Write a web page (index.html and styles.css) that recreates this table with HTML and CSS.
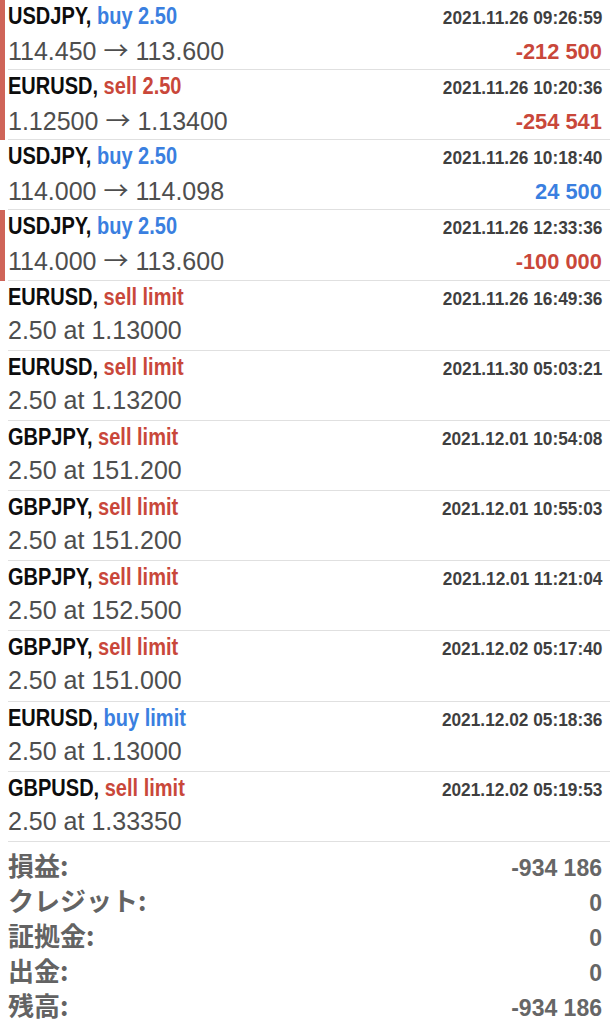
FILE: index.html
```html
<!DOCTYPE html>
<html lang="ja">
<head>
<meta charset="utf-8">
<title>History</title>
<link rel="stylesheet" href="styles.css">
</head>
<body>
<div class="list">
  <div class="row">
    <div class="bar on"></div>
    <div class="body">
      <div class="main">
        <div class="title"><span class="cond"><span class="sym">USDJPY,</span> <span class="buy">buy 2.50</span></span></div>
        <div class="sub">114.450<span class="arrow">→</span>113.600</div>
      </div>
      <div class="side">
        <div class="date"><span class="cond-r">2021.11.26 09:26:59</span></div>
        <div class="pl"><span class="amt sell">-212 500</span></div>
      </div>
    </div>
  </div>
  <div class="row">
    <div class="bar on"></div>
    <div class="body">
      <div class="main">
        <div class="title"><span class="cond"><span class="sym">EURUSD,</span> <span class="sell">sell 2.50</span></span></div>
        <div class="sub">1.12500<span class="arrow">→</span>1.13400</div>
      </div>
      <div class="side">
        <div class="date"><span class="cond-r">2021.11.26 10:20:36</span></div>
        <div class="pl"><span class="amt sell">-254 541</span></div>
      </div>
    </div>
  </div>
  <div class="row">
    <div class="bar"></div>
    <div class="body">
      <div class="main">
        <div class="title"><span class="cond"><span class="sym">USDJPY,</span> <span class="buy">buy 2.50</span></span></div>
        <div class="sub">114.000<span class="arrow">→</span>114.098</div>
      </div>
      <div class="side">
        <div class="date"><span class="cond-r">2021.11.26 10:18:40</span></div>
        <div class="pl"><span class="amt buy">24 500</span></div>
      </div>
    </div>
  </div>
  <div class="row">
    <div class="bar on"></div>
    <div class="body">
      <div class="main">
        <div class="title"><span class="cond"><span class="sym">USDJPY,</span> <span class="buy">buy 2.50</span></span></div>
        <div class="sub">114.000<span class="arrow">→</span>113.600</div>
      </div>
      <div class="side">
        <div class="date"><span class="cond-r">2021.11.26 12:33:36</span></div>
        <div class="pl"><span class="amt sell">-100 000</span></div>
      </div>
    </div>
  </div>
  <div class="row">
    <div class="bar"></div>
    <div class="body">
      <div class="main">
        <div class="title"><span class="cond"><span class="sym">EURUSD,</span> <span class="sell">sell limit</span></span></div>
        <div class="sub">2.50 at 1.13000</div>
      </div>
      <div class="side">
        <div class="date"><span class="cond-r">2021.11.26 16:49:36</span></div>
      </div>
    </div>
  </div>
  <div class="row">
    <div class="bar"></div>
    <div class="body">
      <div class="main">
        <div class="title"><span class="cond"><span class="sym">EURUSD,</span> <span class="sell">sell limit</span></span></div>
        <div class="sub">2.50 at 1.13200</div>
      </div>
      <div class="side">
        <div class="date"><span class="cond-r">2021.11.30 05:03:21</span></div>
      </div>
    </div>
  </div>
  <div class="row">
    <div class="bar"></div>
    <div class="body">
      <div class="main">
        <div class="title"><span class="cond"><span class="sym">GBPJPY,</span> <span class="sell">sell limit</span></span></div>
        <div class="sub">2.50 at 151.200</div>
      </div>
      <div class="side">
        <div class="date"><span class="cond-r">2021.12.01 10:54:08</span></div>
      </div>
    </div>
  </div>
  <div class="row">
    <div class="bar"></div>
    <div class="body">
      <div class="main">
        <div class="title"><span class="cond"><span class="sym">GBPJPY,</span> <span class="sell">sell limit</span></span></div>
        <div class="sub">2.50 at 151.200</div>
      </div>
      <div class="side">
        <div class="date"><span class="cond-r">2021.12.01 10:55:03</span></div>
      </div>
    </div>
  </div>
  <div class="row">
    <div class="bar"></div>
    <div class="body">
      <div class="main">
        <div class="title"><span class="cond"><span class="sym">GBPJPY,</span> <span class="sell">sell limit</span></span></div>
        <div class="sub">2.50 at 152.500</div>
      </div>
      <div class="side">
        <div class="date"><span class="cond-r">2021.12.01 11:21:04</span></div>
      </div>
    </div>
  </div>
  <div class="row">
    <div class="bar"></div>
    <div class="body">
      <div class="main">
        <div class="title"><span class="cond"><span class="sym">GBPJPY,</span> <span class="sell">sell limit</span></span></div>
        <div class="sub">2.50 at 151.000</div>
      </div>
      <div class="side">
        <div class="date"><span class="cond-r">2021.12.02 05:17:40</span></div>
      </div>
    </div>
  </div>
  <div class="row">
    <div class="bar"></div>
    <div class="body">
      <div class="main">
        <div class="title"><span class="cond"><span class="sym">EURUSD,</span> <span class="buy">buy limit</span></span></div>
        <div class="sub">2.50 at 1.13000</div>
      </div>
      <div class="side">
        <div class="date"><span class="cond-r">2021.12.02 05:18:36</span></div>
      </div>
    </div>
  </div>
  <div class="row">
    <div class="bar"></div>
    <div class="body">
      <div class="main">
        <div class="title"><span class="cond"><span class="sym">GBPUSD,</span> <span class="sell">sell limit</span></span></div>
        <div class="sub">2.50 at 1.33350</div>
      </div>
      <div class="side">
        <div class="date"><span class="cond-r">2021.12.02 05:19:53</span></div>
      </div>
    </div>
  </div>
</div>
<div class="summary">
  <div class="srow"><span class="label">損益:</span><span class="value">-934 186</span></div>
  <div class="srow"><span class="label">クレジット:</span><span class="value">0</span></div>
  <div class="srow"><span class="label">証拠金:</span><span class="value">0</span></div>
  <div class="srow"><span class="label">出金:</span><span class="value">0</span></div>
  <div class="srow"><span class="label">残高:</span><span class="value">-934 186</span></div>
</div>
</body>
</html>
```

FILE: styles.css
```css
html, body {
  margin: 0;
  padding: 0;
  background: #ffffff;
}

body {
  font-family: "Liberation Sans", Arial, sans-serif;
  color: #000;
}

.list {
  display: flex;
  flex-direction: column;
}

.row {
  display: flex;
  height: 70.17px;
}

.bar {
  width: 5px;
  flex: none;
}

.bar.on {
  background: #cf6458;
}

.body {
  flex: 1;
  margin-left: 3px;
  padding-right: 8px;
  border-bottom: 1px solid #e0e0e0;
  display: flex;
  justify-content: space-between;
}

.main, .side {
  display: flex;
  flex-direction: column;
}

.side {
  align-items: flex-end;
}

.title {
  font-size: 23px;
  font-weight: 700;
  line-height: 32px;
  white-space: nowrap;
}

.cond {
  display: inline-block;
  transform: scaleX(0.87);
  transform-origin: left center;
}

.sym {
  color: #0d0d0d;
}

.buy {
  color: #3a7fe0;
}

.sell {
  color: #c9473a;
}

.sub {
  font-size: 25px;
  line-height: 34px;
  color: #4e4e4e;
  white-space: nowrap;
}

.arrow {
  font-family: "Noto Sans CJK JP", "DejaVu Sans", sans-serif;
  font-weight: 400;
  margin: 0 7px;
}

.date {
  font-size: 23px;
  line-height: 32px;
  font-weight: 700;
  color: #3f3f3f;
  white-space: nowrap;
}

.cond-r {
  display: inline-block;
  font-size: 19px;
  transform: scaleX(0.91);
  transform-origin: right center;
}

.pl {
  font-size: 25px;
  line-height: 33px;
  white-space: nowrap;
}

.amt {
  display: inline-block;
  font-size: 22.5px;
  font-weight: 700;
  transform: scaleX(0.97);
  transform-origin: right center;
}

.amt.buy {
  color: #3a7fe0;
}

.amt.sell {
  color: #c9473a;
}

.summary {
  padding: 5px 8px 0 8px;
  display: flex;
  flex-direction: column;
}

.srow {
  display: flex;
  justify-content: space-between;
  align-items: baseline;
  height: 35px;
  line-height: 35px;
}

.label {
  font-family: "Noto Sans CJK JP", "Liberation Sans", sans-serif;
  font-size: 26px;
  font-weight: 700;
  color: #636363;
}

.value {
  font-family: "Liberation Sans", Arial, sans-serif;
  font-size: 23px;
  font-weight: 700;
  color: #666666;
}
```
